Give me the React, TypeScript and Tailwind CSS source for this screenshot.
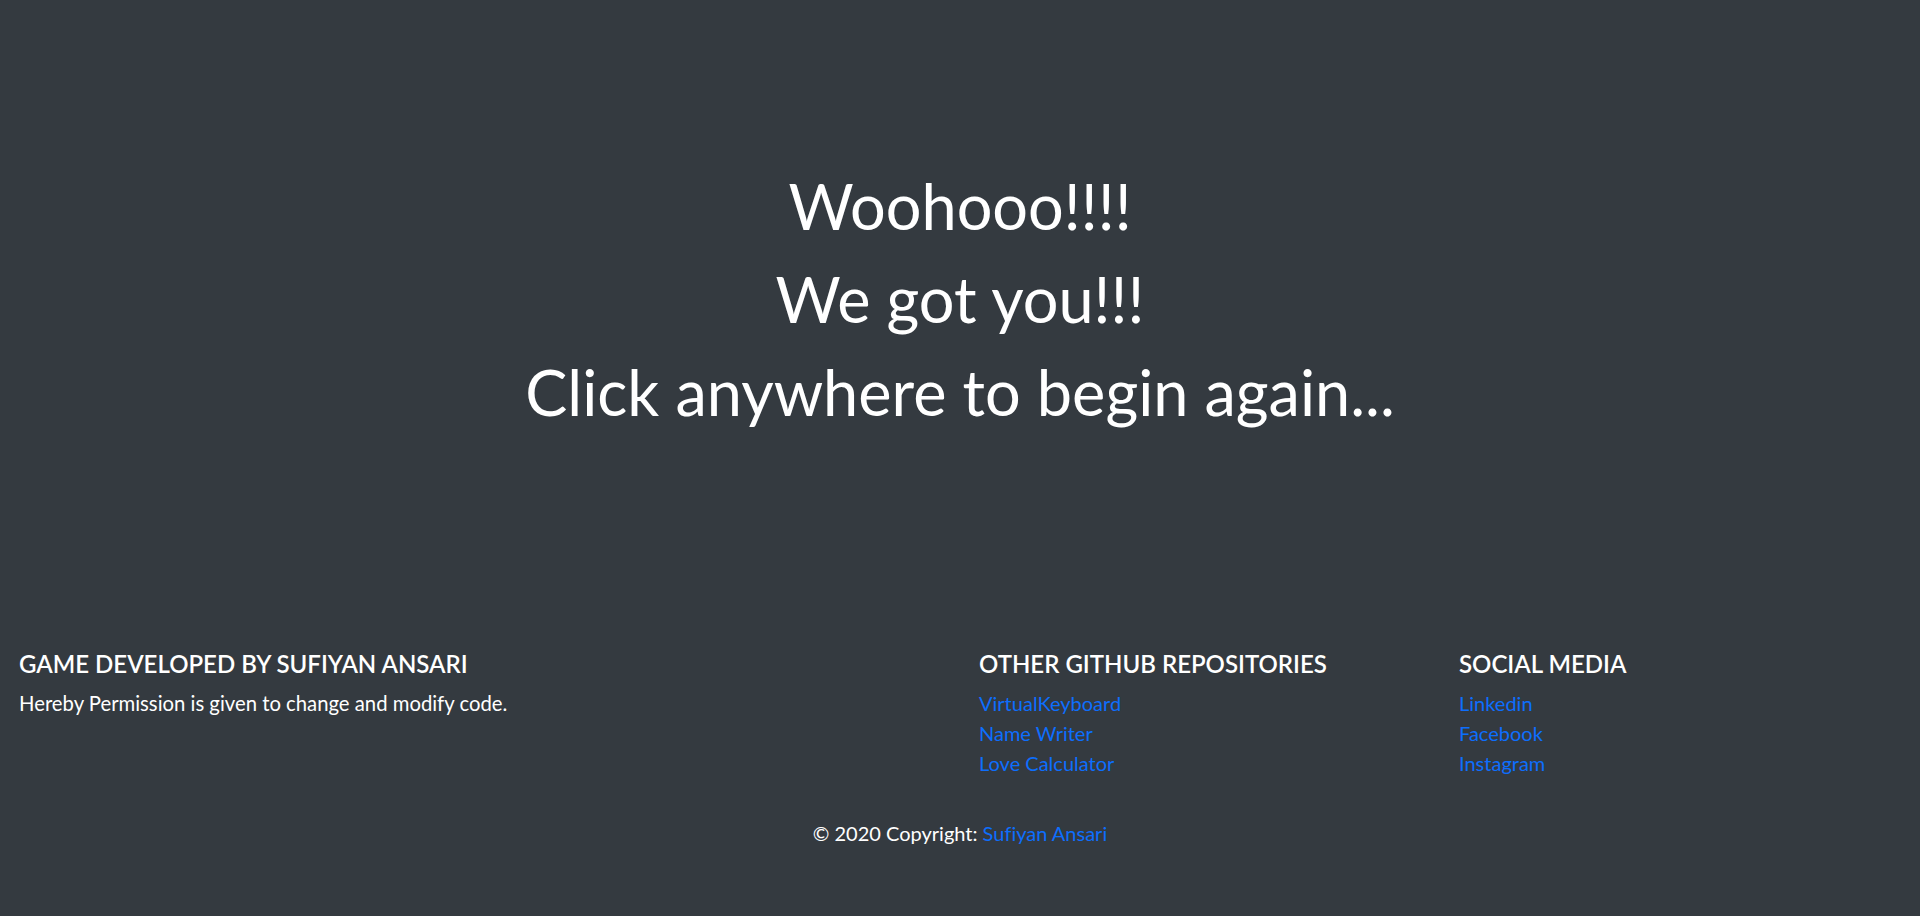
export default function App() {
  const repos = ["VirtualKeyboard", "Name Writer", "Love Calculator"];
  const social = ["Linkedin", "Facebook", "Instagram"];

  return (
    <div
      className="min-h-screen bg-[#343a40] text-white [font-variant-ligatures:none]"
      style={{ fontFamily: "Lato, 'Open Sans', sans-serif" }}
    >
      {/* message */}
      <div className="flex h-[647px] flex-col items-center pt-[167px] text-center">
        <h1 className="mb-4 text-[63px] leading-[77px] font-normal">Woohooo!!!!</h1>
        <h1 className="mb-4 text-[63px] leading-[77px] font-normal">We got you!!!</h1>
        <h1 className="mb-4 text-[63px] leading-[77px] font-normal">Click anywhere to begin again...</h1>
      </div>

      {/* footer */}
      <footer>
        <div className="grid grid-cols-4">
          <div className="col-span-2 px-[19px]">
            <h5 className="mt-[2px] mb-[9px] text-[24px] leading-[30px] font-semibold uppercase">
              Game developed by Sufiyan Ansari
            </h5>
            <p className="text-[20.3px] leading-[30px]">
              Hereby Permission is given to change and modify code.
            </p>
          </div>
          <div className="px-[19px]">
            <h5 className="mt-[2px] mb-[9px] text-[24px] leading-[30px] font-semibold uppercase">
              Other Github repositories
            </h5>
            <ul>
              {repos.map((r) => (
                <li key={r} className="text-[20px] leading-[30px]">
                  <a href="#" className="text-[#0d6efd]">
                    {r}
                  </a>
                </li>
              ))}
            </ul>
          </div>
          <div className="px-[19px]">
            <h5 className="mt-[2px] mb-[9px] text-[24px] leading-[30px] font-semibold uppercase">
              Social Media
            </h5>
            <ul>
              {social.map((s) => (
                <li key={s} className="text-[20px] leading-[30px]">
                  <a href="#" className="text-[#0d6efd]">
                    {s}
                  </a>
                </li>
              ))}
            </ul>
          </div>
        </div>
        <div className="pt-[40px] pb-[20px] text-center text-[20px] leading-[30px]">
          © 2020 Copyright:{" "}
          <a href="#" className="text-[#0d6efd]">
            Sufiyan Ansari
          </a>
        </div>
      </footer>
    </div>
  );
}
